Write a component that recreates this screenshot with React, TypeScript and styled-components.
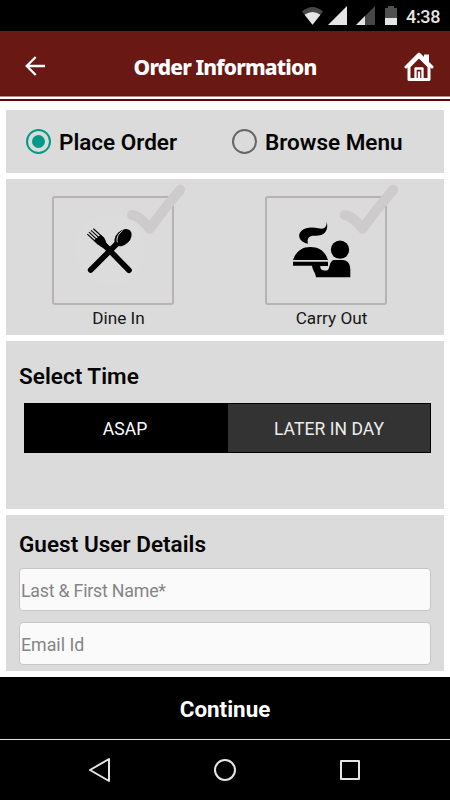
import React from "react";
import styled, { createGlobalStyle } from "styled-components";

const GlobalStyle = createGlobalStyle`
  * { box-sizing: border-box; }
  body { margin: 0; background: #fff; font-family: Roboto, "Liberation Sans", sans-serif; }
`;

const Screen = styled.div`
  width: 450px;
  height: 800px;
  display: flex;
  flex-direction: column;
  overflow: hidden;
  background: #fff;
`;

const StatusBar = styled.div`
  height: 31px;
  flex: none;
  display: flex;
  justify-content: flex-end;
  align-items: center;
  padding-right: 10px;
  gap: 8px;
  background: #000;
`;

const StatusGlyphs = styled.svg`
  margin-right: 1px;
`;

const Clock = styled.span`
  color: #e4e4e4;
  font-size: 18px;
  font-weight: 500;
  line-height: 31px;
  width: 34px;
  letter-spacing: -0.35px;
  padding-top: 2px;
  white-space: nowrap;
`;

const Header = styled.header`
  height: 65px;
  flex: none;
  display: grid;
  grid-template-columns: 70px 1fr 70px;
  align-items: center;
  background: #691813;
  border-bottom: 1px solid #681511;
`;

const Title = styled.h1`
  margin: 0;
  padding-top: 7px;
  text-align: center;
  color: #fff;
  font: 800 21px/28px "Noto Sans", "Open Sans", sans-serif;
  letter-spacing: -0.85px;
  white-space: nowrap;
`;

const IconButton = styled.button<{ $inset?: number }>`
  display: flex;
  justify-content: center;
  align-items: center;
  border: 0;
  padding: 6px 0 0 ${(p) => p.$inset ?? 0}px;
  background: none;
  color: #fff;
`;

const Rule = styled.div`
  height: 5px;
  flex: none;
  border-top: 1px solid #b58b89;
  border-bottom: 2px solid #5f0b0d;
  background: #fff;
`;

const Content = styled.main`
  flex: 1;
  display: flex;
  flex-direction: column;
  gap: 6px;
  padding: 9px 6px 6px;
`;

const Panel = styled.section<{ $height: number }>`
  height: ${(p) => p.$height}px;
  flex: none;
  background: #dbdbdb;
`;

const RadioPanel = styled(Panel)`
  display: grid;
  grid-template-columns: 206px 1fr;
  align-items: center;
  padding-left: 20px;
`;

const RadioLabel = styled.label`
  display: flex;
  align-items: center;
  gap: 8px;
  white-space: nowrap;
  color: #050505;
`;

const RadioMark = styled.span<{ $on?: boolean }>`
  width: 25px;
  height: 25px;
  border-radius: 50%;
  border: 2px solid ${(p) => (p.$on ? "#009a88" : "#666")};
  display: grid;
  place-items: center;
  &::after {
    content: "";
    width: 13px;
    height: 13px;
    border-radius: 50%;
    background: ${(p) => (p.$on ? "#009a88" : "transparent")};
  }
`;

const RadioText = styled.span`
  font-size: 22.5px;
  font-weight: 600;
  line-height: 28px;
`;

const ChoicePanel = styled(Panel)`
  display: grid;
  grid-template-columns: 122px 122px;
  column-gap: 91px;
  padding: 17px 0 0 46px;
  align-items: start;
`;

const Choice = styled.div`
  display: flex;
  flex-direction: column;
  align-items: center;
`;

const Card = styled.div`
  position: relative;
  width: 122px;
  height: 109px;
  border: 2px solid #b7b2b3;
  border-radius: 3px;
`;

const CardArt = styled.svg`
  position: absolute;
  left: -2px;
  top: -2px;
  overflow: visible;
`;

const ChoiceLabel = styled.span`
  margin-top: 2px;
  font-size: 17.2px;
  line-height: 22px;
  color: #161616;
  padding-left: 11px;
  white-space: nowrap;
`;

const FormPanel = styled(Panel)`
  padding: 20px 13px 0;
`;

const GuestPanel = styled(Panel)`
  padding: 14px 13px 0;
`;

const Heading = styled.h2`
  margin: 0;
  height: 30px;
  font-size: 22.5px;
  font-weight: 600;
  line-height: 30px;
  letter-spacing: 0.03px;
  color: #050505;
`;

const Segments = styled.div`
  display: grid;
  grid-template-columns: 203px 1fr;
  width: 407px;
  height: 50px;
  margin: 12px 0 0 5px;
  border: 1px solid #000;
`;

const Segment = styled.button<{ $active?: boolean }>`
  border: 0;
  padding: ${(p) => (p.$active ? "1px 3px 0 0" : "1px 0 0")};
  font: 400 17.5px/22px Roboto, sans-serif;
  letter-spacing: 0.05px;
  color: ${(p) => (p.$active ? "#fff" : "#ececec")};
  background: ${(p) => (p.$active ? "#000" : "#333")};
`;

const Field = styled.input<{ $track: number }>`
  display: block;
  width: 412px;
  height: 43px;
  margin: 9px 0 11px;
  padding: 2px 1px 0;
  border: 1px solid #c6c6c6;
  border-radius: 4px;
  background: #fafafa;
  font: 400 17.8px/22px Roboto, sans-serif;
  letter-spacing: ${(p) => p.$track}px;
  &::placeholder { color: #858585; opacity: 1; }
  & + & { margin-top: 0; }
`;

const Continue = styled.button`
  height: 63px;
  flex: none;
  border: 0;
  border-bottom: 1px solid #e2e2e2;
  padding: 1px 0 0;
  background: #000;
  color: #fff;
  font: 700 22.4px/28px Roboto, sans-serif;
`;

const NavBar = styled.nav`
  height: 60px;
  flex: none;
  display: grid;
  grid-template-columns: repeat(3, 125px);
  justify-content: center;
  align-items: center;
  justify-items: center;
  background: #000;
`;

const Check = () => (
  <path d="M276 105Q299 107 329 146Q372 86 421 29" fill="none" stroke="#cecbcc" strokeWidth="30" strokeLinecap="round" strokeLinejoin="round" />
);

const Cutlery = () => (
  <CardArt width="122" height="109" viewBox="36 48 366 327" aria-hidden="true">
    <circle cx="210" cy="210" r="107" fill="#dcdcdc" />
    <Check />
    <g fill="none" stroke="#000" strokeLinecap="round">
      <path d="M190 192L267 271" strokeWidth="17" />
      <path d="M238 184L152 270" strokeWidth="17" />
      <path d="M143 163L174 192M148 157L180 187M154 152L186 181M161 147L192 175" strokeWidth="3.5" />
    </g>
    <path d="M163 180L182 164Q199 178 199 190Q204 195 210 200L199 211L189 203Q177 200 163 180Z" />
    <ellipse cx="249" cy="173" rx="21" ry="30" transform="rotate(45 249 173)" />
    <path d="M232 187C228 171 237 160 248 152" fill="none" stroke="#dbdbdb" strokeWidth="3" />
  </CardArt>
);

const Server = () => (
  <CardArt width="122" height="109" viewBox="45 48 366 327" aria-hidden="true">
    <g transform="translate(8.5 0)"><Check /></g>
    <path d="M230 124C231 146 220 148 205 145C184 141 167 142 154 153C140 166 149 187 174 191C169 172 180 166 195 167C218 168 238 158 230 124Z" />
    <path d="M129 240C137 216 154 201 181 201C208 201 226 215 234 240Z" />
    <path d="M129 245H234V258H211C209 272 225 274 234 270C240 263 237 247 250 240H278C292 240 301 251 301 269V292H198C196 276 188 272 186 257H129Z" />
    <circle cx="270" cy="209" r="27.5" />
  </CardArt>
);

const StatusIcons = () => (
  <StatusGlyphs width="96" height="31" viewBox="301 0 96 31" aria-hidden="true">
    <path d="M302 11.5Q312.5 2.5 323 11.5L312.5 24.7Z" fill="#474747" />
    <path d="M304.6 14.8Q312.5 9.3 320.4 14.8L312.5 24.7Z" fill="#e5e5e5" />
    <path d="M347 6V25H328Z" fill="#e5e5e5" />
    <path d="M375 6V25H356Z" fill="#474747" />
    <path d="M365 16V25H356Z" fill="#e5e5e5" />
    <path d="M385 8H388V6H394V8H397V18H385Z" fill="#505050" />
    <path d="M385 18H397V25H385Z" fill="#e5e5e5" />
  </StatusGlyphs>
);

export default function App() {
  return (
    <>
      <GlobalStyle />
      <Screen>
        <StatusBar>
          <StatusIcons />
          <Clock>4:38</Clock>
        </StatusBar>
        <Header>
          <IconButton aria-label="Back">
            <svg width="20" height="20" viewBox="0 0 20 20" fill="none" stroke="#fff" strokeWidth="2.3">
              <path d="M20 10H2M10.7 1L1.7 10L10.7 19" />
            </svg>
          </IconButton>
          <Title>Order Information</Title>
          <IconButton aria-label="Home" $inset={8}>
            <svg width="30" height="30" viewBox="0 0 30 30">
              <path d="M20 3.5H25V11H20Z" fill="#fff" />
              <path d="M5 15.5V28.5H25V15.5L15 5.5Z" fill="#691813" stroke="#fff" strokeWidth="3" strokeLinejoin="round" />
              <path d="M2 16L15 3L28 16" fill="none" stroke="#fff" strokeWidth="3" strokeLinecap="round" strokeLinejoin="round" />
              <path d="M11.5 28.5V17.5H18.5V28.5M15 20.5V28.5" fill="none" stroke="#fff" strokeWidth="2.3" strokeLinejoin="round" />
            </svg>
          </IconButton>
        </Header>
        <Rule />
        <Content>
          <RadioPanel $height={63}>
            <RadioLabel><RadioMark $on /><RadioText>Place Order</RadioText></RadioLabel>
            <RadioLabel><RadioMark /><RadioText>Browse Menu</RadioText></RadioLabel>
          </RadioPanel>
          <ChoicePanel $height={156}>
            <Choice>
              <Card><Cutlery /></Card>
              <ChoiceLabel>Dine In</ChoiceLabel>
            </Choice>
            <Choice>
              <Card><Server /></Card>
              <ChoiceLabel>Carry Out</ChoiceLabel>
            </Choice>
          </ChoicePanel>
          <FormPanel $height={168}>
            <Heading>Select Time</Heading>
            <Segments>
              <Segment $active>ASAP</Segment>
              <Segment>LATER IN DAY</Segment>
            </Segments>
          </FormPanel>
          <GuestPanel $height={156}>
            <Heading>Guest User Details</Heading>
            <Field $track={-0.22} placeholder="Last &amp; First Name*" />
            <Field $track={0} placeholder="Email Id" />
          </GuestPanel>
        </Content>
        <Continue>Continue</Continue>
        <NavBar>
          <svg width="24" height="26" viewBox="0 0 24 26" fill="none" stroke="#e5e5e5" strokeWidth="2" strokeLinejoin="round"><path d="M21 2V24L2 13Z" /></svg>
          <svg width="24" height="24" viewBox="0 0 24 24" fill="none" stroke="#e5e5e5" strokeWidth="2"><circle cx="12" cy="12" r="10" /></svg>
          <svg width="24" height="24" viewBox="0 0 24 24" fill="none" stroke="#e5e5e5" strokeWidth="2" strokeLinejoin="round"><path d="M3 3H21V21H3Z" /></svg>
        </NavBar>
      </Screen>
    </>
  );
}
